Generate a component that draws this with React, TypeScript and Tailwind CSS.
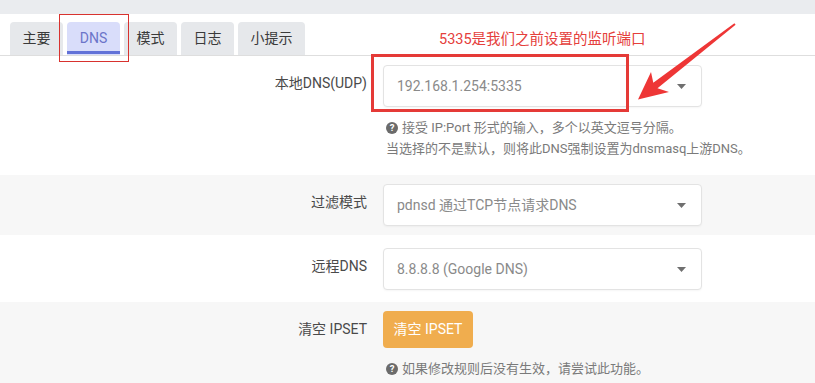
import { CircleHelp } from "lucide-react";

const font = { fontFamily: 'Roboto, "Noto Sans CJK SC", sans-serif' };

const tabs = ["主要", "DNS", "模式", "日志", "小提示"];

function Caret() {
  return (
    <svg width="9" height="5" viewBox="0 0 9 5" className="shrink-0">
      <path d="M0 0 L9 0 L4.5 5 Z" fill="#6f6f6f" />
    </svg>
  );
}

function HelpIcon() {
  return (
    <svg width="12" height="12" viewBox="0 0 12 12" className="inline-block mr-[4px] -mt-[2px] align-middle">
      <circle cx="6" cy="6" r="6" fill="#6b6b6b" />
      <text x="6" y="9.3" textAnchor="middle" fontSize="9.5" fontWeight="700" fill="#fff" fontFamily="Roboto, sans-serif">?</text>
    </svg>
  );
}

function Select({ value }: { value: string }) {
  return (
    <div className="flex items-center justify-between w-[319px] h-[42px] pl-[13px] pr-[15px] bg-white border border-[#e3e3e3] rounded-[4px] shadow-[0_1px_2px_rgba(0,0,0,0.04)]">
      <span className="text-[14px] text-[#8a8a8a]">{value}</span>
      <Caret />
    </div>
  );
}

function Row({
  label,
  bg,
  className,
  children,
}: {
  label: string;
  bg: string;
  className: string;
  children: React.ReactNode;
}) {
  return (
    <div className={`flex items-start ${bg} ${className}`}>
      <div className="w-[367px] text-right text-[14px] leading-[20px] mt-[8px] text-[#4a4a4a] shrink-0">
        {label}
      </div>
      <div className="pl-[16px] flex flex-col">{children}</div>
    </div>
  );
}

export default function App() {
  return (
    <div className="relative w-[815px] h-[383px] overflow-hidden bg-white" style={font}>
      <div className="h-[14px] bg-[#eaecef]" />
      <div className="flex gap-[4px] pl-[10px] pt-[8px] border-b border-[#dedede]">
        {tabs.map((t) => (
          <div
            key={t}
            className={`relative h-[33px] px-[12px] flex items-center justify-center rounded-t-[4px] text-[14px] ${
              t === "DNS" ? "bg-[#d9ddfa] text-[#6b74c9] w-[53px]" : "bg-[#e6e8eb] text-[#3a3a3a]"
            } ${t === "小提示" ? "w-[67px]" : "w-[53px]"}`}
          >
            {t}
            {t === "DNS" && <div className="absolute left-0 right-0 bottom-[1px] h-[3px] bg-[#6272d8]" />}
          </div>
        ))}
      </div>

      <Row label="本地DNS(UDP)" bg="bg-white" className="pt-[9px] pb-[16px]">
        <Select value="192.168.1.254:5335" />
        <div className="mt-[10px] text-[13px] leading-[21px] text-[#7a7a7a] pl-[3px]">
          <div>
            <HelpIcon />
            接受 IP:Port 形式的输入，多个以英文逗号分隔。
          </div>
          <div>当选择的不是默认，则将此DNS强制设置为dnsmasq上游DNS。</div>
        </div>
      </Row>

      <Row label="过滤模式" bg="bg-[#f7f7f7]" className="pt-[9px] pb-[9px]">
        <Select value="pdnsd 通过TCP节点请求DNS" />
      </Row>

      <Row label="远程DNS" bg="bg-white" className="pt-[13px] pb-[12px]">
        <Select value="8.8.8.8 (Google DNS)" />
      </Row>

      <Row label="清空 IPSET" bg="bg-[#f7f7f7]" className="pt-[9px] pb-[10px] h-[81px]">
        <button className="w-[90px] h-[37px] rounded-[4px] bg-[#f0ad4e] text-white text-[14px]">清空 IPSET</button>
        <div className="mt-[10px] text-[13px] leading-[21px] text-[#7a7a7a] pl-[3px]">
          <HelpIcon />
          如果修改规则后没有生效，请尝试此功能。
        </div>
      </Row>

      {/* annotations */}
      <div className="absolute left-[59px] top-[14px] w-[70px] h-[48px] border-[1.5px] border-[#d8322e]" />
      <div className="absolute left-[371px] top-[54px] w-[258px] h-[58px] border-[3px] border-[#e53a37]" />
      <div className="absolute left-[439px] top-[31px] text-[14.5px] leading-[18px] text-[#e5403c] whitespace-nowrap">
        5335是我们之前设置的监听端口
      </div>
      <svg className="absolute left-0 top-0 pointer-events-none" width="815" height="383">
        <polygon
          points="735.6,24.7 657.5,88.3 669,92 638,99.5 651,72 653.3,82.7 734.4,23.3"
          fill="#ee3636"
        />
      </svg>
    </div>
  );
}
